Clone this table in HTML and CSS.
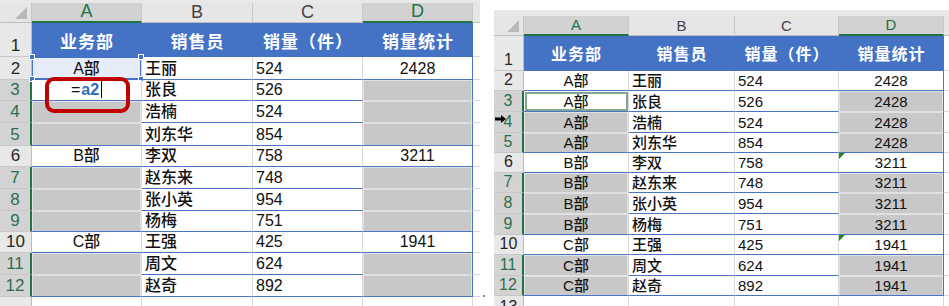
FILE: index.html
```html
<!DOCTYPE html>
<html lang="zh-CN">
<head>
<meta charset="utf-8">
<title>Excel 合并单元格填充</title>
<link rel="stylesheet" href="styles.css">
</head>
<body>
<div class="screen">
  <section class="sheet sheet-left">
    <div class="strip"></div>
    <div class="grid">
      <div class="corner"></div>
      <div class="ch sel">A</div><div class="ch">B</div><div class="ch">C</div><div class="ch sel">D</div><div class="ch stub"></div>

      <div class="rh">1</div>
      <div class="hd">业务部</div><div class="hd">销售员</div><div class="hd">销量（件）</div><div class="hd">销量统计</div><div class="hstub"></div>

      <div class="rh">2</div>
      <div class="c ctr ref">A部<i class="hdl tl"></i><i class="hdl tr"></i><i class="hdl bl"></i><i class="hdl br"></i></div><div class="c">王丽</div><div class="c">524</div><div class="c ctr last">2428</div><div class="c stub"></div>

      <div class="rh sel">3</div>
      <div class="c ctr edit">=<span class="reftxt">a2</span><span class="caret"></span></div><div class="c">张良</div><div class="c">526</div><div class="c g last"></div><div class="c stub"></div>

      <div class="rh sel">4</div>
      <div class="c g"></div><div class="c">浩楠</div><div class="c">524</div><div class="c g last"></div><div class="c stub"></div>

      <div class="rh sel">5</div>
      <div class="c g end"></div><div class="c">刘东华</div><div class="c">854</div><div class="c g end last"></div><div class="c stub"></div>

      <div class="rh">6</div>
      <div class="c ctr">B部</div><div class="c">李双</div><div class="c">758</div><div class="c ctr last">3211</div><div class="c stub"></div>

      <div class="rh sel">7</div>
      <div class="c g"></div><div class="c">赵东来</div><div class="c">748</div><div class="c g last"></div><div class="c stub"></div>

      <div class="rh sel">8</div>
      <div class="c g"></div><div class="c">张小英</div><div class="c">954</div><div class="c g last"></div><div class="c stub"></div>

      <div class="rh sel">9</div>
      <div class="c g end"></div><div class="c">杨梅</div><div class="c">751</div><div class="c g end last"></div><div class="c stub"></div>

      <div class="rh">10</div>
      <div class="c ctr">C部</div><div class="c">王强</div><div class="c">425</div><div class="c ctr last">1941</div><div class="c stub"></div>

      <div class="rh sel">11</div>
      <div class="c g"></div><div class="c">周文</div><div class="c">624</div><div class="c g last"></div><div class="c stub"></div>

      <div class="rh sel">12</div>
      <div class="c g end"></div><div class="c">赵奇</div><div class="c">892</div><div class="c g end last"></div><div class="c stub"></div>

      <div class="rh"></div>
      <div class="c blank"></div><div class="c blank"></div><div class="c blank"></div><div class="c blank"></div><div class="c blank stub"></div>
    </div>
    <div class="callout"></div>
  </section>

  <div class="gap"><div class="dot"></div></div>

  <section class="sheet sheet-right">
    <div class="strip"></div>
    <div class="grid">
      <div class="corner"></div>
      <div class="ch sel">A</div><div class="ch">B</div><div class="ch">C</div><div class="ch sel">D</div><div class="ch stub"></div>

      <div class="rh">1</div>
      <div class="hd">业务部</div><div class="hd">销售员</div><div class="hd">销量（件）</div><div class="hd">销量统计</div><div class="hstub"></div>

      <div class="rh">2</div>
      <div class="c ctr">A部</div><div class="c">王丽</div><div class="c">524</div><div class="c ctr last">2428</div><div class="c stub"></div>

      <div class="rh sel">3</div>
      <div class="c ctr active">A部</div><div class="c">张良</div><div class="c">526</div><div class="c ctr g last">2428</div><div class="c stub"></div>

      <div class="rh sel">4</div>
      <div class="c ctr g">A部</div><div class="c">浩楠</div><div class="c">524</div><div class="c ctr g last">2428</div><div class="c stub"></div>

      <div class="rh sel">5</div>
      <div class="c ctr g end">A部</div><div class="c">刘东华</div><div class="c">854</div><div class="c ctr g end last">2428</div><div class="c stub"></div>

      <div class="rh">6</div>
      <div class="c ctr">B部</div><div class="c">李双</div><div class="c">758</div><div class="c ctr last flag">3211</div><div class="c stub"></div>

      <div class="rh sel">7</div>
      <div class="c ctr g">B部</div><div class="c">赵东来</div><div class="c">748</div><div class="c ctr g last">3211</div><div class="c stub"></div>

      <div class="rh sel">8</div>
      <div class="c ctr g">B部</div><div class="c">张小英</div><div class="c">954</div><div class="c ctr g last">3211</div><div class="c stub"></div>

      <div class="rh sel">9</div>
      <div class="c ctr g end">B部</div><div class="c">杨梅</div><div class="c">751</div><div class="c ctr g end last">3211</div><div class="c stub"></div>

      <div class="rh">10</div>
      <div class="c ctr">C部</div><div class="c">王强</div><div class="c">425</div><div class="c ctr last flag">1941</div><div class="c stub"></div>

      <div class="rh sel">11</div>
      <div class="c ctr g">C部</div><div class="c">周文</div><div class="c">624</div><div class="c ctr g last">1941</div><div class="c stub"></div>

      <div class="rh sel">12</div>
      <div class="c ctr g end">C部</div><div class="c">赵奇</div><div class="c">892</div><div class="c ctr g end last">1941</div><div class="c stub"></div>

      <div class="rh">13</div>
      <div class="c blank"></div><div class="c blank"></div><div class="c blank"></div><div class="c blank"></div><div class="c blank stub"></div>
    </div>
    <svg class="pointer" width="11" height="8" viewBox="0 0 11 8"><path d="M0 2.6h6V0l5 4-5 4V5.4H0z" fill="#000"/></svg>
  </section>
</div>
</body>
</html>
```

FILE: styles.css
```css
* { box-sizing: border-box; margin: 0; padding: 0; }

html, body { background: #fff; }

body {
  width: 949px;
  height: 306px;
  overflow: hidden;
  font-family: "Liberation Sans", "Noto Sans CJK SC", sans-serif;
  color: #111;
}

.screen {
  display: flex;
  height: 306px;
}

.sheet {
  position: relative;
  height: 306px;
  overflow: hidden;
  display: flex;
  flex-direction: column;
  flex: none;
}

.sheet-left { width: 480px; }
.sheet-right { width: 455px; padding-top: 10px; }

.gap {
  width: 14px;
  flex: none;
  padding-top: 295px;
}

.dot {
  width: 2px;
  height: 2px;
  margin-left: 3px;
  background: #8a8a8a;
}

.strip {
  flex: none;
  background: #e9e9e9;
}
.sheet-left .strip { height: 3px; }
.sheet-right .strip { height: 6px; }

.grid {
  display: grid;
  flex: none;
  line-height: 1;
  font-weight: 500;
}

.sheet-left .grid {
  grid-template-columns: 32px 110px 111px 110px 110px 7px;
  grid-template-rows: 20px 34px 23px 21px 22px 23px 21px 22px 22px 21px 21px 22px 22px 22px;
  font-size: 16px;
}

.sheet-right .grid {
  grid-template-columns: 30px 105px 106px 104px 105px 5px;
  grid-template-rows: 20px 35px 20px 21px 21px 20px 20px 20px 21px 21px 20px 21px 20px 22px;
  font-size: 15px;
}

/* corner select-all */
.corner {
  position: relative;
  background: #e6e6e6;
  border-right: 1px solid #c4c4c4;
  border-bottom: 1px solid #bdbdbd;
}
.corner::after {
  content: "";
  position: absolute;
  right: 4px;
  bottom: 3px;
  border-left: 12px solid transparent;
  border-bottom: 12px solid #b9b9b9;
}

/* column headers */
.ch {
  display: flex;
  justify-content: center;
  align-items: flex-end;
  padding-bottom: 1px;
  background: #e6e6e6;
  border-right: 1px solid #c8c8c8;
  border-bottom: 1px solid #bdbdbd;
  color: #444;
  font-weight: normal;
}
.sheet-left .ch { font-size: 18px; }
.sheet-right .ch { font-size: 15px; padding-bottom: 2px; }
.ch.sel {
  background: #d2d2d2;
  color: #217346;
  border-bottom: 2px solid #217346;
}
.ch.stub { border-right: none; }

/* row headers */
.rh {
  display: flex;
  justify-content: center;
  align-items: flex-end;
  padding-bottom: 2px;
  background: #e8e8e8;
  border-right: 1px solid #bdbdbd;
  border-bottom: 1px solid #c8c8c8;
  color: #262626;
  font-weight: normal;
}
.sheet-left .rh { font-size: 17px; }
.sheet-right .rh { font-size: 16px; }
.rh.sel {
  background: #d3d3d3;
  color: #2e6e4c;
  border-right: 2px solid #217346;
}

/* blue table header */
.hd {
  display: flex;
  justify-content: center;
  align-items: flex-end;
  padding-bottom: 6px;
  background: #4472c4;
  color: #fff;
  font-weight: bold;
  letter-spacing: 1px;
}
.sheet-left .hd { font-size: 17px; }
.sheet-right .hd { font-size: 16px; padding-bottom: 8px; }
.hstub { background: #fff; border-bottom: 1px solid #d9d9d9; }

/* body cells */
.c {
  position: relative;
  display: flex;
  align-items: flex-end;
  padding: 0 3px 2px;
  white-space: nowrap;
  border-right: 1px solid #d9d9d9;
  border-bottom: 1px solid #4a74c4;
}
.ctr { justify-content: center; }
.last { border-right: 1px solid #4a74c4; }
.c.stub { border-right: none; border-bottom-color: #d9d9d9; }
.c.blank { border-bottom: none; }

.g {
  background: #c8c8c8;
  border-bottom-color: #e0e0e0;
  box-shadow: inset 1px 1px 0 #e2e2e2, inset -1px 0 0 #e2e2e2;
}
.g.end { border-bottom-color: #4a74c4; }
.g.last { border-right-color: #4a74c4; }

/* formula reference cell A2 */
.ref {
  background: #e7edf8;
  box-shadow: inset 0 0 0 1px #4472c4;
}
.hdl {
  position: absolute;
  width: 6px;
  height: 6px;
  background: #4472c4;
  border: 1px solid #fff;
}
.hdl.tl { left: -3px; top: -3px; }
.hdl.tr { right: -3px; top: -3px; }
.hdl.bl { left: -3px; bottom: -3px; }
.hdl.br { right: -3px; bottom: -3px; }

/* cell in edit mode */
.edit { background: #fff; padding-left: 3px; }
.reftxt { color: #2f6cc4; font-weight: bold; margin-left: 1px; }
.caret {
  display: inline-block;
  width: 1px;
  height: 17px;
  margin-left: 2px;
  background: #000;
  align-self: flex-end;
}

/* active cell on the right sheet */
.active {
  background: #fff;
  outline: 2px solid #7fa792;
  outline-offset: -3px;
}

/* error indicator */
.flag::before {
  content: "";
  position: absolute;
  left: 0;
  top: 0;
  border-top: 6px solid #1b8a1b;
  border-right: 6px solid transparent;
}

/* red callout round A3 */
.callout {
  position: absolute;
  left: 45px;
  top: 77px;
  width: 85px;
  height: 36px;
  border: 4px solid #c00000;
  border-radius: 9px;
}

.pointer {
  position: absolute;
  left: 1px;
  top: 115px;
}
```
